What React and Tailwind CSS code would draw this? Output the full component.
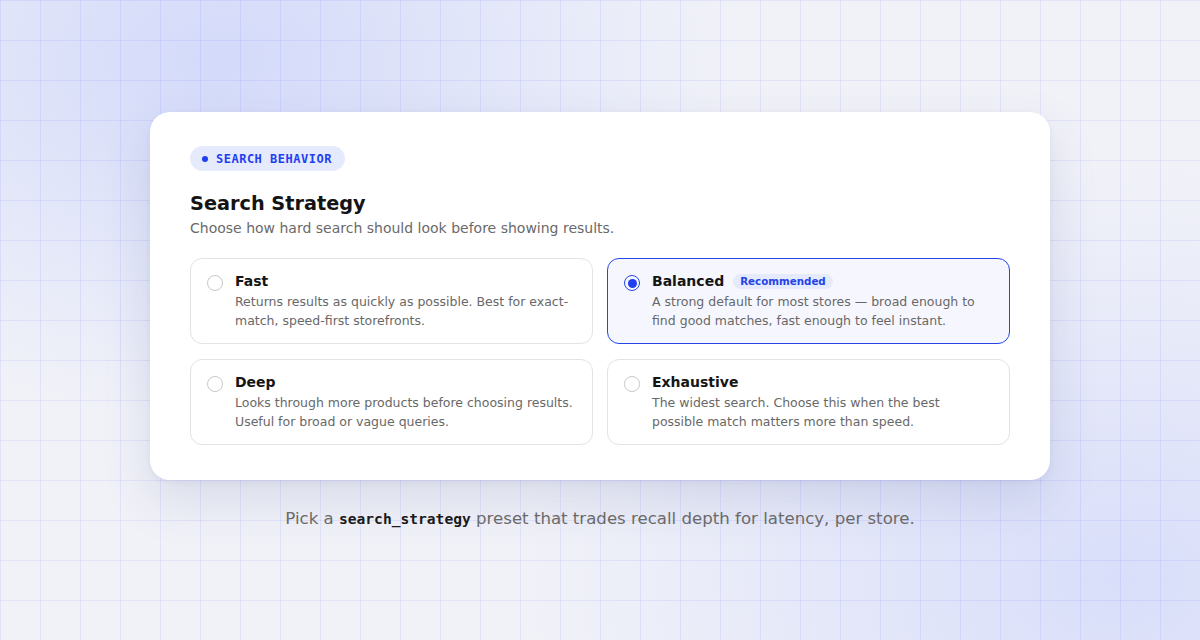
import { useState } from 'react';

const options = [
  {
    id: 'fast',
    title: 'Fast',
    desc: 'Returns results as quickly as possible. Best for exact-match, speed-first storefronts.',
  },
  {
    id: 'balanced',
    title: 'Balanced',
    badge: 'Recommended',
    desc: 'A strong default for most stores — broad enough to find good matches, fast enough to feel instant.',
  },
  {
    id: 'deep',
    title: 'Deep',
    desc: 'Looks through more products before choosing results. Useful for broad or vague queries.',
  },
  {
    id: 'exhaustive',
    title: 'Exhaustive',
    desc: 'The widest search. Choose this when the best possible match matters more than speed.',
  },
];

function Option({ opt, selected, onSelect }) {
  return (
    <button
      onClick={() => onSelect(opt.id)}
      className={`flex items-start gap-[12px] text-left rounded-[12px] border pl-[16px] pr-[14px] pt-[12px] h-[86px] ${
        selected ? 'border-[#2446e6] bg-[#f6f7fe]' : 'border-[#e3e3e6] bg-white'
      }`}
    >
      <span
        className={`mt-[4px] w-[16px] h-[16px] shrink-0 rounded-full flex items-center justify-center ${
          selected ? 'border-[1.5px] border-[#2446e6]' : 'border border-[#c8c8cc]'
        }`}
      >
        {selected && <span className="w-[9px] h-[9px] rounded-full bg-[#1f3ff0]" />}
      </span>
      <span className="flex flex-col">
        <span className="flex items-center gap-[9px] h-[20px]">
          <span className="text-[14px] font-bold text-[#151515]">{opt.title}</span>
          {opt.badge && (
            <span className="rounded-full bg-[#e6eafd] px-[7px] py-[1px] text-[10.3px] font-bold text-[#2343e8] leading-[13px]">
              {opt.badge}
            </span>
          )}
        </span>
        <span className="mt-[1px] max-w-[340px] text-[12.5px] leading-[19px] text-[#686868]">{opt.desc}</span>
      </span>
    </button>
  );
}

export default function App() {
  const [value, setValue] = useState('balanced');

  return (
    <div
      className="relative w-[1200px] h-[640px] overflow-hidden bg-[#f1f2f8] flex flex-col items-center"
      style={{ fontFamily: '"DejaVu Sans", "Noto Sans", sans-serif' }}
    >
      {/* background glows + grid */}
      <div className="absolute inset-0 bg-[radial-gradient(ellipse_520px_360px_at_220px_60px,#d3dafa_0%,rgba(211,218,250,0)_100%)]" />
      <div className="absolute inset-0 bg-[radial-gradient(ellipse_600px_420px_at_1120px_580px,#d9defa_0%,rgba(217,222,250,0)_100%)]" />
      <div className="absolute inset-0 bg-[linear-gradient(to_right,rgba(110,120,255,0.12)_1px,transparent_1px),linear-gradient(to_bottom,rgba(110,120,255,0.12)_1px,transparent_1px)] bg-[size:40px_40px]" />

      <div className="relative mt-[112px] w-[900px] rounded-[20px] bg-white px-[40px] pt-[34px] pb-[35px] shadow-[0_20px_50px_rgba(60,70,140,0.14),0_2px_6px_rgba(60,70,140,0.06)]">
        <div className="flex w-fit items-center gap-[8px] rounded-full bg-[#e6eafd] h-[25px] pl-[12px] pr-[13px]">
          <span className="w-[6px] h-[6px] rounded-full bg-[#1f3ff0]" />
          <span
            className="text-[12px] leading-[14px] font-bold tracking-[0.5px] text-[#1f3ff0]"
            style={{ fontFamily: '"DejaVu Sans Mono", monospace' }}
          >
            SEARCH BEHAVIOR
          </span>
        </div>

        <h1 className="mt-[21px] text-[19.3px] leading-[24px] font-bold text-[#141414]">Search Strategy</h1>
        <p className="mt-[2px] text-[14px] leading-[20px] text-[#6a6a6a]">
          Choose how hard search should look before showing results.
        </p>

        <div className="mt-[20px] grid grid-cols-2 gap-x-[14px] gap-y-[15px]">
          {options.map((o) => (
            <Option key={o.id} opt={o} selected={value === o.id} onSelect={setValue} />
          ))}
        </div>
      </div>

      <p className="relative mt-[28px] text-[16.6px] leading-[22px] text-[#6a6a6a]">
        Pick a{' '}
        <span className="font-bold text-[#1a1a1a] text-[14.6px]" style={{ fontFamily: '"DejaVu Sans Mono", monospace' }}>
          search_strategy
        </span>{' '}
        preset that trades recall depth for latency, per store.
      </p>
    </div>
  );
}
